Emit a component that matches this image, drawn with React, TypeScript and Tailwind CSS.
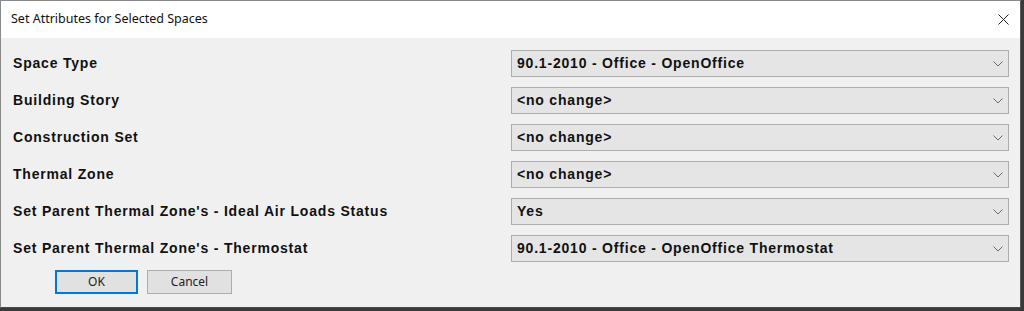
import React from 'react'

const rows = [
  { label: 'Space Type', value: '90.1-2010 - Office - OpenOffice' },
  { label: 'Building Story', value: '<no change>' },
  { label: 'Construction Set', value: '<no change>' },
  { label: 'Thermal Zone', value: '<no change>' },
  { label: "Set Parent Thermal Zone's - Ideal Air Loads Status", value: 'Yes' },
  { label: "Set Parent Thermal Zone's - Thermostat", value: '90.1-2010 - Office - OpenOffice Thermostat' },
]

function Chevron() {
  return (
    <svg width="10" height="6" viewBox="0 0 10 6" className="shrink-0">
      <path d="M0.5 0.5 L5 5 L9.5 0.5" fill="none" stroke="#6b6b6b" strokeWidth="1" />
    </svg>
  )
}

function Combo({ value }: { value: string }) {
  return (
    <div className="flex h-[27px] w-[498px] items-center justify-between border border-[#adadad] bg-[#e5e5e5] pl-[5px] pr-[5px]">
      <span className="text-[14px] font-bold tracking-[0.8px] text-[#111]">{value}</span>
      <Chevron />
    </div>
  )
}

export default function App() {
  return (
    <div className="h-[311px] w-[1024px] overflow-hidden bg-[#3a3a3a] font-['Liberation_Sans',Arial,sans-serif]">
      <div className="flex h-[308px] w-[1021px] flex-col border border-[#8a8a8a] border-r-[#5a5a5a] border-b-[#4a4a4a] bg-[#f0f0f0]">
        <div className="flex h-[37px] shrink-0 items-center justify-between bg-white pl-[10px] pr-[10px]">
          <span className="font-['Noto_Sans',sans-serif] text-[12.5px] text-[#111]">Set Attributes for Selected Spaces</span>
          <svg width="11" height="11" viewBox="0 0 11 11" className="mr-[1px]">
            <path d="M0.5 0.5 L10.5 10.5 M10.5 0.5 L0.5 10.5" stroke="#222" strokeWidth="1" />
          </svg>
        </div>
        <div className="flex flex-col gap-[10px] pl-[12px] pr-[11px] pt-[12px]">
          {rows.map((r) => (
            <div key={r.label} className="flex items-center justify-between">
              <span className="text-[14px] font-bold tracking-[0.8px] text-[#111]">{r.label}</span>
              <Combo value={r.value} />
            </div>
          ))}
        </div>
        <div className="mt-[8px] flex gap-[9px] pl-[54px]">
          <button className="h-[24px] w-[83px] border-2 border-[#0078d7] bg-[#e1e1e1] font-['Noto_Sans',sans-serif] text-[12px] text-[#222]">OK</button>
          <button className="h-[24px] w-[85px] border border-[#adadad] bg-[#e1e1e1] font-['Noto_Sans',sans-serif] text-[12px] text-[#222]">Cancel</button>
        </div>
      </div>
    </div>
  )
}
